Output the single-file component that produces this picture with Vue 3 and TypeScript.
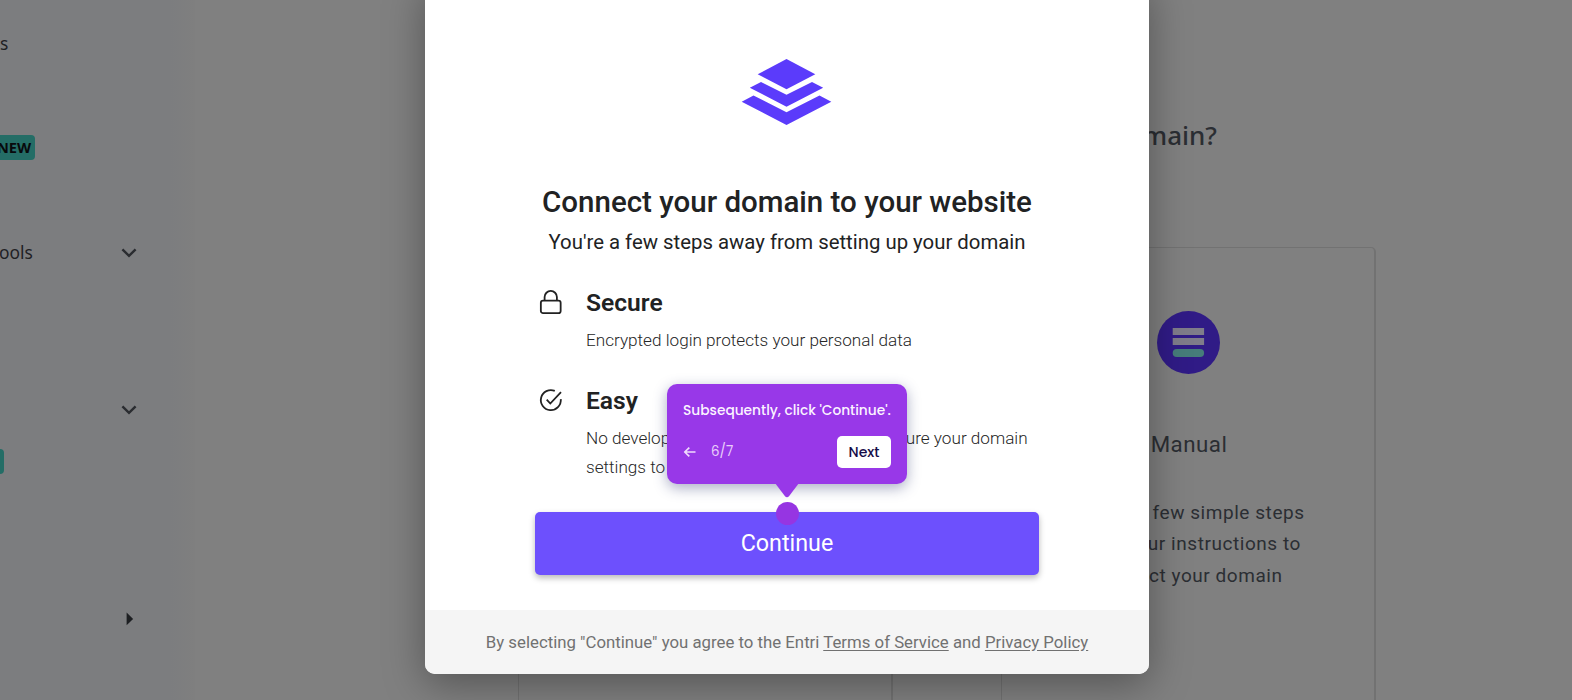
<script setup lang="ts">
interface NavItem {
  label?: string
  badge?: string
  icon?: 'down' | 'right'
}

const nav: NavItem[] = [
  { label: 's' },
  {},
  { badge: 'NEW' },
  {},
  { label: 'ools', icon: 'down' },
  {},
  {},
  { icon: 'down' },
  { badge: '' },
  {},
  {},
  { icon: 'right' },
]

const steps = ['Follow a few simple steps', 'follow our instructions to', 'connect your domain']
</script>

<template>
  <div class="screen">
    <div class="page">
      <nav class="sidebar">
        <div v-for="(item, i) in nav" :key="i" class="nav-row">
          <span v-if="item.label" class="nav-label">{{ item.label }}</span>
          <span v-if="item.badge !== undefined" class="badge" :class="{ clipped: !item.badge }">{{ item.badge }}</span>
          <svg v-if="item.icon" class="nav-icon" viewBox="0 0 16 16">
            <path v-if="item.icon === 'down'" d="M1.400 4.400 8 10.800l6.600-6.400" fill="none" stroke="#2a2c30" stroke-width="2.400" />
            <path v-else d="M5.600 1.600v12.600l6.500-6.300z" fill="#1d1f22" />
          </svg>
        </div>
      </nav>
      <main class="main">
        <h1 class="question">Connect your domain?</h1>
        <div class="cards">
          <section class="card"></section>
          <section class="card">
            <svg class="card-icon" viewBox="0 0 63 63">
              <circle cx="31.500" cy="31.500" r="31.500" fill="#301b86" />
              <path d="M15.700 16.900h31.400v7H15.700zM15.700 27.100h31.400v7H15.700z" fill="#7f7c8a" />
              <rect x="15.700" y="37.900" width="31.400" height="8.100" rx="4" fill="#467c7a" />
            </svg>
            <h2>Manual</h2>
            <p><span v-for="line in steps" :key="line">{{ line }}</span></p>
          </section>
        </div>
      </main>
    </div>

    <div class="modal">
      <div class="body">
        <svg class="logo" viewBox="0 0 92 68">
          <g fill="#5b3bfb">
            <path d="M46 1 74.800 16.200 46 31.300 17.200 16.200z" />
            <path d="M20.500 24 46 36.700 71.500 24l11.200 5.700L46 48.700 9.300 29.700z" />
            <path d="M13 37.400 46 54.300 79 37.400l11.800 6.300L46 67.100 1.200 43.700z" />
          </g>
        </svg>
        <h2 class="title">Connect your domain to your website</h2>
        <p class="subtitle">You're a few steps away from setting up your domain</p>
        <div class="feature">
          <svg class="feature-icon" viewBox="0 0 24 24" fill="none" stroke="#222" stroke-width="1.800">
            <rect x="1.850" y="10.600" width="19.800" height="12.500" rx="2.200" />
            <path d="M5.600 10.600V7.100a6.150 6.150 0 0 1 12.300 0v3.500" />
          </svg>
          <div>
            <h3>Secure</h3>
            <p>Encrypted login protects your personal data</p>
          </div>
        </div>
        <div class="feature">
          <svg class="feature-icon" viewBox="0 0 24 24" fill="none" stroke="#222" stroke-width="1.800">
            <path d="M15.800 2.900A10 10 0 1 0 21.800 11.200" />
            <path d="M7.700 11.700l3.600 3.800L22 4.100" />
          </svg>
          <div>
            <h3>Easy</h3>
            <p>No developer needed. Automatically configure your domain<br />settings to work</p>
          </div>
        </div>
        <button class="continue" type="button">Continue</button>
      </div>
      <footer class="footer">
        <span>By selecting "Continue" you agree to the Entri <u>Terms of Service</u> and <u>Privacy Policy</u></span>
      </footer>
    </div>

    <div class="tip">
      <p class="tip-text">Subsequently, click 'Continue'.</p>
      <div class="tip-row">
        <svg class="back" viewBox="0 0 14 12" fill="none" stroke="#f0dcfc" stroke-width="1.700">
          <path d="M12.500 6H1.800M6.300 1.600 1.700 6l4.600 4.400" stroke-linejoin="round" />
        </svg>
        <span class="count">6/7</span>
        <button class="next" type="button">Next</button>
      </div>
      <svg class="pointer" viewBox="0 0 24 15"><path d="M0 0h24l-9.800 13q-2.200 2.400-4.400 0z" fill="#9838e8" /></svg>
    </div>
    <div class="dot"></div>
  </div>
</template>

<style>
body {
  margin: 0;
  overflow: hidden;
}
</style>

<style scoped>
* {
  box-sizing: border-box;
}
h1, h2, h3, p {
  margin: 0;
}
.screen {
  position: relative;
  width: 1572px;
  height: 700px;
  overflow: hidden;
  font-family: Roboto, sans-serif;
}
.page {
  display: flex;
  height: 700px;
  background: #808080;
}
.sidebar {
  width: 195px;
  padding-top: 17px;
  background: linear-gradient(90deg, #7c7d7f 170px, #7f7f7f 195px);
  color: #1f2124;
  font-family: "Noto Sans", sans-serif;
}
.nav-row {
  display: flex;
  align-items: center;
  height: 52.350px;
}
.nav-label {
  padding-bottom: 1px;
  font-size: 17.400px;
}
.nav-label:has(+ .nav-icon) {
  margin-left: -1px;
  padding-bottom: 2px;
}
.badge {
  display: flex;
  align-items: center;
  height: 25px;
  margin-left: -10px;
  padding: 0 4px 1px 7px;
  border-radius: 4px;
  background: #246d66;
  color: #08090c;
  font-size: 14.600px;
  font-weight: 700;
}
.badge.clipped {
  width: 14px;
}
.nav-icon {
  width: 16px;
  height: 16px;
  margin-left: auto;
  margin-right: 58px;
}
.main {
  flex: 1;
  padding: 117px 196px 0 323px;
  color: #2b2e33;
}
.question {
  padding-right: 159px;
  font: 500 26px/36px "Noto Sans", sans-serif;
  text-align: right;
  white-space: nowrap;
}
.cards {
  display: flex;
  justify-content: space-between;
  margin-top: 94px;
}
.card {
  width: 375px;
  height: 500px;
  padding-top: 63px;
  border: 1px solid #727272;
  border-right-width: 2px;
  border-radius: 5px;
  text-align: center;
}
.card-icon {
  display: block;
  width: 63px;
  height: 63px;
  margin: 0 auto;
}
.card h2 {
  margin-top: 55px;
  padding-left: 2px;
  font-size: 22.300px;
  font-weight: 400;
  line-height: 30px;
  letter-spacing: 0.500px;
}
.card p {
  margin-top: 38px;
  padding-left: 1px;
  font-size: 19px;
  line-height: 31.400px;
  letter-spacing: 0.550px;
}
.card span {
  display: block;
}
.modal {
  position: absolute;
  top: -20px;
  left: 425px;
  width: 724px;
  height: 693.500px;
  border-radius: 0 0 10px 10px;
  background: #fff;
  box-shadow: 0 10px 40px rgba(0, 0, 0, 0.350);
  color: #212223;
}
.body {
  height: 629.500px;
  padding: 78px 110px 0;
}
.logo {
  display: block;
  width: 92px;
  height: 68px;
  margin: 0 auto;
  transform: translateX(-0.500px);
}
.title {
  margin-top: 55.500px;
  font-size: 29.500px;
  font-weight: 500;
  line-height: 40px;
  text-align: center;
  white-space: nowrap;
}
.subtitle {
  margin-top: 6px;
  font-size: 20.350px;
  line-height: 28px;
  text-align: center;
  white-space: nowrap;
}
.feature {
  display: flex;
  height: 98px;
  padding-left: 4px;
  white-space: nowrap;
}
.subtitle + .feature {
  margin-top: 31px;
}
.feature-icon {
  width: 24px;
  height: 24px;
  margin: 3.500px 23px 0 0;
}
.feature h3 {
  font-size: 24.600px;
  font-weight: 600;
  line-height: 32px;
}
.feature p {
  margin-top: 7px;
  color: #262626;
  font-size: 17.150px;
  font-weight: 300;
  line-height: 29.200px;
}
.continue {
  display: block;
  width: 504px;
  height: 63px;
  margin-top: 29.500px;
  padding: 0 0 2px;
  border: 0;
  border-radius: 5px;
  background: #6d50fd;
  box-shadow: 0 3px 6px rgba(0, 0, 0, 0.280);
  color: #fff;
  font: 400 23.300px/60px Roboto, sans-serif;
}
.footer {
  display: flex;
  align-items: center;
  justify-content: center;
  height: 64px;
  border-radius: 0 0 10px 10px;
  background: #f5f5f5;
  color: #717171;
  font-size: 16.800px;
  white-space: nowrap;
}
.footer u {
  text-underline-offset: 2px;
}
.tip {
  position: absolute;
  top: 383.500px;
  left: 667px;
  width: 240px;
  height: 100px;
  padding: 16px;
  border-radius: 10px;
  background: #9838e8;
  box-shadow: 0 4px 14px rgba(40, 50, 110, 0.400);
  font-family: Poppins, Inter, sans-serif;
}
.tip-text {
  color: #fbf3ff;
  font-size: 13.750px;
  font-weight: 500;
  line-height: 21px;
  white-space: nowrap;
}
.tip-row {
  display: flex;
  align-items: center;
  margin-top: 15px;
}
.back {
  width: 14px;
  height: 12px;
}
.count {
  margin-left: 14px;
  padding-top: 1px;
  color: #e9cdfa;
  font-size: 13.400px;
}
.next {
  width: 54px;
  height: 32px;
  margin-left: auto;
  padding: 1px 0 0;
  border: 0;
  border-radius: 5px;
  background: #fff;
  color: #160c48;
  font: 500 14px Poppins, Inter, sans-serif;
}
.pointer {
  position: absolute;
  top: 99.500px;
  left: 108px;
  width: 24px;
  height: 15px;
}
.dot {
  position: absolute;
  top: 501.500px;
  left: 775.500px;
  width: 23.500px;
  height: 23.500px;
  border-radius: 50%;
  background: #9635e2;
}
</style>
